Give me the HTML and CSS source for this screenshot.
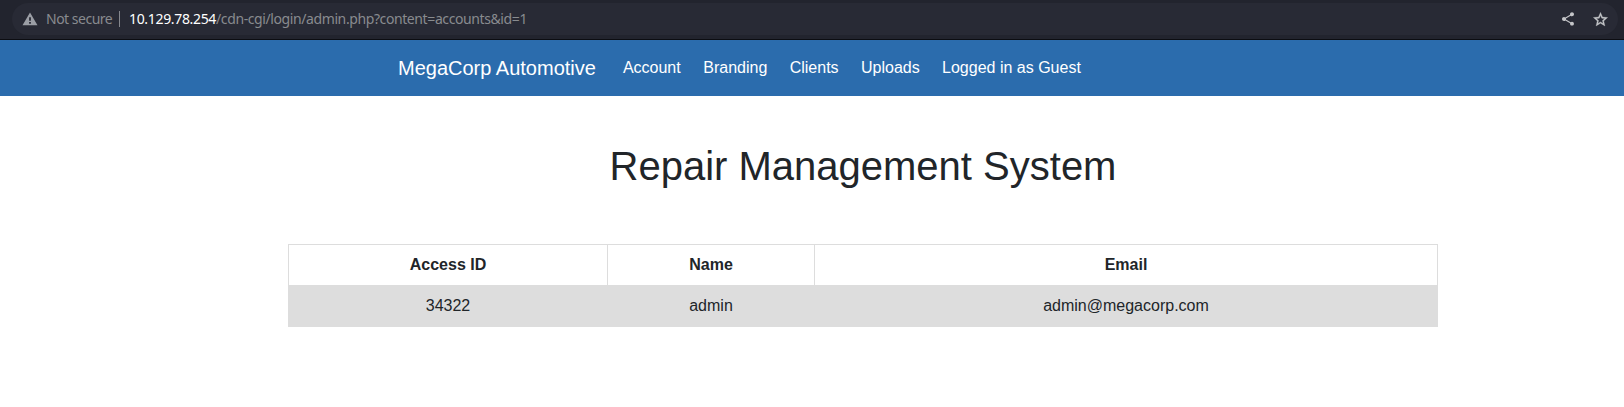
FILE: index.html
```html
<!DOCTYPE html>
<html lang="en">
<head>
<meta charset="utf-8">
<title>MegaCorp Automotive</title>
<link rel="stylesheet" href="styles.css">
</head>
<body>
<div class="browser-bar">
  <div class="address">
    <svg class="warning" viewBox="0 0 16 14"><path fill="#9b9ea5" fill-rule="evenodd" d="M8 .5 15.5 13.3H.5ZM7.1 5.2v3.6h1.8V5.2ZM7.1 10v1.8h1.8V10Z"/></svg>
    <span class="security">Not secure</span>
    <span class="divider"></span>
    <span class="host">10.129.78.254</span><span class="path">/cdn-cgi/login/admin.php?content=accounts&amp;id=1</span>
    <svg class="share" viewBox="0 0 24 24"><path fill="#c4c5c8" d="M18 16.08c-.76 0-1.44.3-1.96.77L8.91 12.7c.05-.23.09-.46.09-.7s-.04-.47-.09-.7l7.05-4.11c.54.5 1.25.81 2.04.81 1.66 0 3-1.34 3-3s-1.34-3-3-3-3 1.34-3 3c0 .24.04.47.09.7L8.04 9.81C7.5 9.31 6.79 9 6 9c-1.66 0-3 1.34-3 3s1.34 3 3 3c.79 0 1.5-.31 2.04-.81l7.12 4.16c-.05.21-.08.43-.08.65 0 1.61 1.31 2.92 2.92 2.92s2.92-1.31 2.92-2.92-1.31-2.92-2.92-2.92z"/></svg>
    <svg class="star" viewBox="0 0 24 24"><path fill="#c4c5c8" stroke="#c4c5c8" stroke-width=".5" d="m22 9.24-7.19-.62L12 2 9.19 8.63 2 9.24l5.46 4.73L5.82 21 12 17.27 18.18 21l-1.63-7.03L22 9.24zM12 15.4l-3.76 2.27 1-4.28-3.32-2.88 4.38-.38L12 6.1l1.71 4.04 4.38.38-3.32 2.88 1 4.28L12 15.4z"/></svg>
  </div>
</div>
<nav class="navbar">
  <a class="brand">MegaCorp Automotive</a>
  <a class="nav-link">Account</a>
  <a class="nav-link">Branding</a>
  <a class="nav-link">Clients</a>
  <a class="nav-link">Uploads</a>
  <a class="nav-link">Logged in as Guest</a>
</nav>
<main class="content">
  <h1 class="title">Repair Management System</h1>
  <table class="accounts">
    <colgroup><col class="col-id"><col class="col-name"><col class="col-email"></colgroup>
    <tr><th>Access ID</th><th>Name</th><th>Email</th></tr>
    <tr class="shaded"><td>34322</td><td>admin</td><td>admin@megacorp.com</td></tr>
  </table>
</main>
</body>
</html>
```
FILE: styles.css
```css
* { box-sizing: border-box; }
body {
  margin: 0;
  background: #fff;
  color: #212529;
  font: 16px/24px "Liberation Sans", Arial, sans-serif;
  overflow: hidden;
}
.browser-bar {
  height: 40px;
  padding: 3px 6px 0 12px;
  background: #22242e;
  border-bottom: 1px solid #0c0d12;
}
.address {
  display: flex;
  align-items: center;
  height: 32px;
  padding: 0 9px 0 10px;
  border-radius: 16px;
  background: #282a35;
  font: 14px/20px "Noto Sans", sans-serif;
  color: #888b8f;
}
.warning { width: 16px; height: 14px; }
.security {
  width: 66px;
  margin-left: 8px;
  white-space: nowrap;
  letter-spacing: -0.5px;
}
.divider { width: 1px; height: 16px; margin: 0 9px 0 7px; background: #85878d; }
.host { color: #fff; letter-spacing: -0.33px; }
.path { letter-spacing: -0.4px; }
.share { width: 16px; height: 16px; margin-left: auto; }
.star { width: 17px; height: 17px; margin-left: 16px; }
.navbar {
  display: flex;
  align-items: center;
  height: 56px;
  padding-left: 398px;
  background: #2b6cad;
  color: #fff;
}
.brand { margin-right: 19px; font-size: 20px; line-height: 30px; }
.nav-link { padding: 0 11.4px 0 8px; }
.nav-link + .nav-link { padding: 0 11.2px; }
.content { width: 1150px; margin-left: 288px; padding-top: 46px; }
.title {
  margin: 0 0 54px;
  font-size: 40px;
  font-weight: 400;
  line-height: 48px;
  text-align: center;
}
.accounts {
  width: 1150px;
  border-collapse: collapse;
  table-layout: fixed;
  text-align: center;
}
.accounts th, .accounts td { padding: 8px; border: 1px solid #ddd; }
.col-id { width: 319px; }
.col-name { width: 207px; }
.shaded { background: #ddd; }
```
